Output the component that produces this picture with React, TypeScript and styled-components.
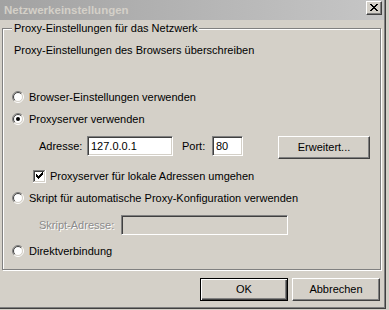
import React from "react";
import styled, { createGlobalStyle } from "styled-components";

const GlobalStyle = createGlobalStyle`
  html, body { margin: 0; padding: 0; background: #d4d0c8; }
  body {
    font-family: "Liberation Sans", Arial, sans-serif;
    font-size: 11px;
    color: #000;
  }
  * { box-sizing: border-box; }
`;

const Window = styled.div`
  width: 386px;
  height: 309px;
  background: #d4d0c8;
  border-right: 1px solid #404040;
  border-bottom: 1px solid #404040;
  box-shadow: inset -1px -1px 0 #808080;
  display: flex;
  flex-direction: column;
`;

const TitleBar = styled.div`
  height: 20px;
  margin-right: 1px;
  padding: 1px 2px 0 4px;
  display: flex;
  align-items: flex-start;
  justify-content: space-between;
  background: linear-gradient(to right, #a2a2a2, #c6c6c6);
`;

const TitleText = styled.span`
  font-weight: bold;
  font-size: 11.5px;
  line-height: 18px;
  color: #d4d0c8;
`;

const CloseButton = styled.div`
  width: 16px;
  height: 14px;
  background: #d4d0c8;
  border-top: 1px solid #fff;
  border-left: 1px solid #fff;
  border-right: 1px solid #404040;
  border-bottom: 1px solid #404040;
  box-shadow: inset -1px -1px 0 #808080;
  display: flex;
  align-items: center;
  justify-content: center;
  padding: 0 1px 1px 0;
`;

const Body = styled.div`
  padding: 8px 0 0 2px;
  display: flex;
  flex-direction: column;
`;

const Group = styled.div`
  position: relative;
  width: 379px;
  height: 242px;
  border: 1px solid #808080;
  box-shadow: inset 1px 1px 0 #fff, 1px 1px 0 #fff;
  display: flex;
  flex-direction: column;
`;

const Legend = styled.span`
  position: absolute;
  top: -8px;
  left: 9px;
  padding: 0 2px;
  line-height: 14px;
  background: #d4d0c8;
`;

const Row = styled.div<{ $mt: number; $indent: number; $h: number; $gap?: number }>`
  display: flex;
  align-items: center;
  margin-top: ${(p) => p.$mt}px;
  padding-left: ${(p) => p.$indent}px;
  height: ${(p) => p.$h}px;
  gap: ${(p) => p.$gap ?? 0}px;
  line-height: 14px;
  white-space: nowrap;
`;

const FieldRow = styled.div<{ $mt: number; $indent: number; $h: number }>`
  display: flex;
  align-items: flex-start;
  margin-top: ${(p) => p.$mt}px;
  padding-left: ${(p) => p.$indent}px;
  height: ${(p) => p.$h}px;
  white-space: nowrap;
`;

const FieldLabel = styled.span<{ $w: number; $ml?: number; $disabled?: boolean }>`
  width: ${(p) => p.$w}px;
  margin-left: ${(p) => p.$ml ?? 0}px;
  line-height: 20px;
  color: ${(p) => (p.$disabled ? "#8c8c8c" : "#000")};
  text-shadow: ${(p) => (p.$disabled ? "1px 1px 0 #fff" : "none")};
`;

const TextBox = styled.div<{ $w: number; $disabled?: boolean }>`
  width: ${(p) => p.$w}px;
  height: 20px;
  padding: 0 3px;
  line-height: 18px;
  background: ${(p) => (p.$disabled ? "#d4d0c8" : "#fff")};
  border-top: 1px solid #808080;
  border-left: 1px solid #808080;
  border-right: 1px solid #fff;
  border-bottom: 1px solid #fff;
  box-shadow: inset 1px 1px 0 #404040, inset -1px -1px 0 #d4d0c8;
`;

const Button = styled.div<{ $w: number; $ml?: number; $default?: boolean }>`
  width: ${(p) => p.$w}px;
  height: 23px;
  margin-left: ${(p) => p.$ml ?? 0}px;
  display: flex;
  align-items: center;
  justify-content: center;
  background: #d4d0c8;
  border-top: 1px solid ${(p) => (p.$default ? "#000" : "#fff")};
  border-left: 1px solid ${(p) => (p.$default ? "#000" : "#fff")};
  border-right: 1px solid ${(p) => (p.$default ? "#000" : "#404040")};
  border-bottom: 1px solid ${(p) => (p.$default ? "#000" : "#404040")};
  box-shadow: ${(p) =>
    p.$default
      ? "inset 1px 1px 0 #fff, inset -1px -1px 0 #404040, inset -2px -2px 0 #808080"
      : "inset -1px -1px 0 #808080"};
  padding-bottom: 1px;
`;

const ButtonBar = styled.div`
  margin-top: 8px;
  padding-right: 5px;
  display: flex;
  justify-content: flex-end;
  gap: 4px;
`;

const Mark = styled.svg`
  flex: none;
  display: block;
`;

const RadioIcon = ({ checked }: { checked?: boolean }) => {
  const d = (r: number) => r * Math.SQRT1_2;
  const arc = (r: number, top: boolean) => {
    const a = d(r);
    return top
      ? `M${6 - a} ${6 + a} A${r} ${r} 0 0 1 ${6 + a} ${6 - a}`
      : `M${6 + a} ${6 - a} A${r} ${r} 0 0 1 ${6 - a} ${6 + a}`;
  };
  return (
    <Mark width="12" height="12" viewBox="0 0 12 12">
      <circle cx="6" cy="6" r="4.5" fill="#fff" />
      <path d={arc(5.5, true)} stroke="#808080" fill="none" />
      <path d={arc(5.5, false)} stroke="#fff" fill="none" />
      <path d={arc(4.5, true)} stroke="#404040" fill="none" />
      <path d={arc(4.5, false)} stroke="#d4d0c8" fill="none" />
      {checked && <circle cx="6" cy="6" r="2" fill="#000" />}
    </Mark>
  );
};

const CheckIcon = () => {
  const cols = [5, 6, 7, 6, 5, 4, 3];
  return (
    <Mark width="13" height="13" viewBox="0 0 13 13" shapeRendering="crispEdges">
      <rect x="0" y="0" width="13" height="13" fill="#fff" />
      <rect x="0" y="0" width="12" height="1" fill="#808080" />
      <rect x="0" y="0" width="1" height="12" fill="#808080" />
      <rect x="1" y="1" width="10" height="1" fill="#404040" />
      <rect x="1" y="1" width="1" height="10" fill="#404040" />
      <rect x="12" y="0" width="1" height="13" fill="#fff" />
      <rect x="0" y="12" width="13" height="1" fill="#fff" />
      <rect x="11" y="1" width="1" height="11" fill="#d4d0c8" />
      <rect x="1" y="11" width="11" height="1" fill="#d4d0c8" />
      {cols.map((y, i) => (
        <rect key={i} x={3 + i} y={y - 1} width="1" height="3" fill="#000" />
      ))}
    </Mark>
  );
};

const CloseGlyph = () => {
  const rows = [0, 1, 2, 3, 2, 1, 0];
  return (
    <Mark width="8" height="7" viewBox="0 0 8 7" shapeRendering="crispEdges">
      {rows.map((x, y) => (
        <React.Fragment key={y}>
          <rect x={x} y={y} width="2" height="1" fill="#000" />
          <rect x={6 - x} y={y} width="2" height="1" fill="#000" />
        </React.Fragment>
      ))}
    </Mark>
  );
};

export default function App() {
  return (
    <>
      <GlobalStyle />
      <Window>
        <TitleBar>
          <TitleText>Netzwerkeinstellungen</TitleText>
          <CloseButton>
            <CloseGlyph />
          </CloseButton>
        </TitleBar>
        <Body>
          <Group>
            <Legend>Proxy-Einstellungen für das Netzwerk</Legend>
            <Row $mt={14} $indent={11} $h={14}>
              Proxy-Einstellungen des Browsers überschreiben
            </Row>
            <Row $mt={32} $indent={9} $h={16} $gap={5}>
              <RadioIcon />
              Browser-Einstellungen verwenden
            </Row>
            <Row $mt={6} $indent={9} $h={16} $gap={5}>
              <RadioIcon checked />
              Proxyserver verwenden
            </Row>
            <FieldRow $mt={9} $indent={36} $h={23}>
              <FieldLabel $w={48}>Adresse:</FieldLabel>
              <TextBox $w={86}>127.0.0.1</TextBox>
              <FieldLabel $w={30} $ml={9}>Port:</FieldLabel>
              <TextBox $w={31}>80</TextBox>
              <Button $w={92} $ml={35}>Erweitert...</Button>
            </FieldRow>
            <Row $mt={9} $indent={30} $h={16} $gap={4}>
              <CheckIcon />
              Proxyserver für lokale Adressen umgehen
            </Row>
            <Row $mt={6} $indent={9} $h={16} $gap={5}>
              <RadioIcon />
              Skript für automatische Proxy-Konfiguration verwenden
            </Row>
            <FieldRow $mt={9} $indent={36} $h={20}>
              <FieldLabel $w={82} $disabled>Skript-Adresse:</FieldLabel>
              <TextBox $w={167} $disabled />
            </FieldRow>
            <Row $mt={8} $indent={9} $h={16} $gap={5}>
              <RadioIcon />
              Direktverbindung
            </Row>
          </Group>
          <ButtonBar>
            <Button $w={88} $default>OK</Button>
            <Button $w={88}>Abbrechen</Button>
          </ButtonBar>
        </Body>
      </Window>
    </>
  );
}
